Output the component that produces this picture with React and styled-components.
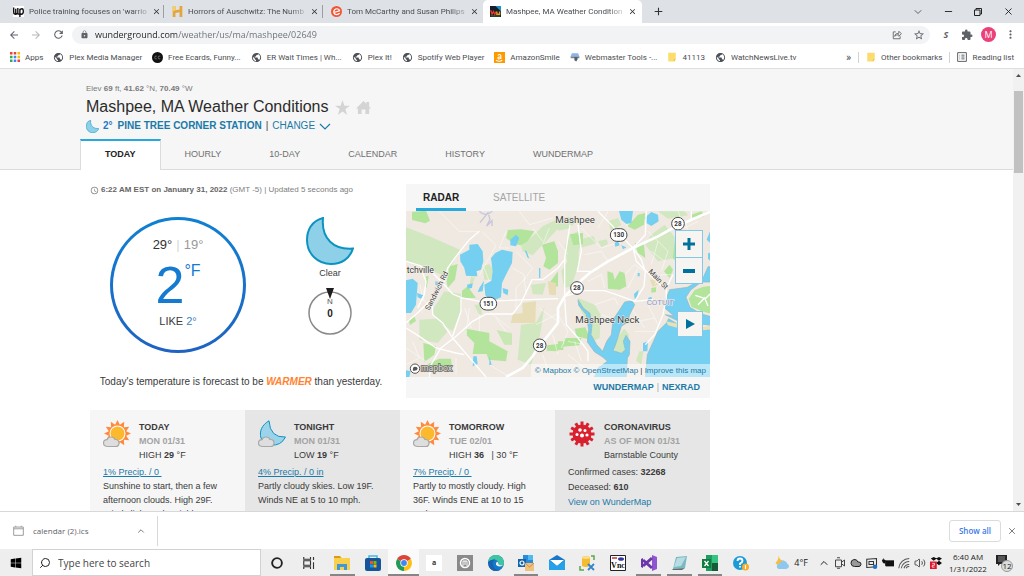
import React from "react";
import styled, {createGlobalStyle, css} from "styled-components";
import {
    MdAccessTime, MdAdd, MdArrowBack, MdArrowForward, MdClose, MdExtension,
    MdLock, MdMoreVert, MdPublic, MdRefresh, MdStarBorder
} from "react-icons/md";
import {FaWindows} from "react-icons/fa";
import {ChevronDown, ChevronUp, Cloud, Minus, Search, Volume2, X} from "lucide-react";

const colors = {
    link: "#1a7aa8",
    accent: "#26a9dc",
    text: "#3a3a3a",
    panel: "#f6f6f6",
    panelDark: "#e6e6e6",
    chrome: "#5f6368",
}

const fonts = {
    ui: '"Open Sans", "Noto Sans", sans-serif',
    small: 'Roboto, "Noto Sans", sans-serif',
    page: '"Liberation Sans", Arial, sans-serif',
}

const GlobalStyle = createGlobalStyle`
  * {
    box-sizing: border-box;
  }

  body {
    margin: 0;
    background: #fff;
    font-family: ${fonts.ui};
    font-size: 9px;
  }

  button, input {
    margin: 0;
    padding: 0;
    border: 0;
    background: none;
    font-family: inherit;
    font-size: inherit;
    color: inherit;
  }

  a {
    color: ${colors.link};
    text-decoration: none;
  }

  svg {
    display: block;
    flex: none;
  }
`

const Screen = styled.div`
  display: flex;
  flex-direction: column;
  height: 100vh;
`

/* ---------- browser frame ---------- */

const TabStrip = styled.div`
  display: flex;
  align-items: stretch;
  height: 23px;
  padding-left: 6px;
  background: #dee1e6;
`
const BrowserTab = styled.div`
  flex: 0 1 159px;
  min-width: 0;
  display: flex;
  align-items: center;
  gap: 5px;
  padding: 0 4px 0 7px;
  font-family: ${fonts.small};
  font-size: 8px;
  color: #4a4d51;
  border-right: 1px solid transparent;
  background: linear-gradient(#9a9da1, #9a9da1) no-repeat right center / ${props => props.divided ? "1px 13px" : "0 0"};

  ${props => props.active && css`
    background: #fff;
    border-radius: 5px 5px 0 0;
  `}
`
const TabTitle = styled.span`
  flex: 1;
  white-space: nowrap;
  mask-image: linear-gradient(to right, #000 88%, rgba(0, 0, 0, 0.3));
`
const IconButton = styled.button`
  display: flex;
  align-items: center;
  justify-content: center;
  width: ${props => props.w || 22}px;
  color: ${props => props.color || colors.chrome};
`
const WindowButtons = styled.div`
  display: flex;
  margin-left: auto;
`

const Toolbar = styled.div`
  display: flex;
  align-items: center;
  height: 23px;
  padding: 0 4px 0 3px;
`
const Omnibox = styled.div`
  flex: 1;
  display: flex;
  align-items: center;
  height: 18px;
  margin: 0 5px 0 3px;
  padding: 0 3px 0 8px;
  gap: 6px;
  border-radius: 9px;
  background: #f1f3f4;
  color: ${colors.chrome};
`
const Address = styled.input`
  flex: 1;
  min-width: 0;
  height: 16px;
  font-size: 9px;
  color: transparent;
  background: linear-gradient(to right, #202124 82px, #6a6e73 82px);
  background-clip: text;
`
const Avatar = styled.button`
  width: 15px;
  height: 15px;
  margin: 0 4px;
  border-radius: 50%;
  background: #ec407a;
  color: #fff;
  line-height: 15px;
`

const Bookmarks = styled.nav`
  display: flex;
  align-items: center;
  gap: 10px;
  height: 23px;
  padding: 0 10px;
  border-bottom: 1px solid #dcdee0;
  font-family: ${fonts.small};
  font-size: 8px;
  color: #4a4d51;
`
const Bookmark = styled.a`
  display: flex;
  align-items: center;
  gap: 5px;
  white-space: nowrap;
  color: inherit;
`
const BookmarksEnd = styled.div`
  display: flex;
  align-items: center;
  gap: 7px;
  margin-left: auto;
`
const More = styled.button`
  font-size: 11px;
`
const Divider = styled.span`
  width: 1px;
  height: 11px;
  background: #d0d3d6;
`

/* ---------- web page ---------- */

const Viewport = styled.div`
  flex: 1;
  min-height: 0;
  display: flex;
`
const Page = styled.main`
  flex: 1;
  overflow: hidden;
  font-family: ${fonts.page};
  color: ${colors.text};
`
const Scrollbar = styled.div`
  display: flex;
  flex-direction: column;
  align-items: center;
  gap: 13px;
  width: 11px;
  padding: 4px 0;
  background: #f1f1f1;
`
const Thumb = styled.div`
  width: 9px;
  height: 19%;
  margin-bottom: auto;
  background: #c1c1c1;
`

const Container = styled.div`
  max-width: 630px;
  margin-left: 80px;
`
const PageHeader = styled.header`
  padding-top: 14px;
  background: ${colors.panel};
  box-shadow: inset 0 -1px #dcdcdc;
`
const HeaderText = styled.div`
  padding: 0 6px 6px;
`
const Elevation = styled.div`
  font-size: 8px;
  line-height: 12px;
  color: #7a7a7a;
`
const TitleRow = styled.div`
  display: flex;
  align-items: center;
  gap: 6px;
  margin: 2px 0;
`
const Title = styled.h1`
  margin: 0;
  font-size: 16px;
  line-height: 20px;
  font-weight: 400;
  color: #2b2b2b;
`
const Station = styled.div`
  display: flex;
  align-items: center;
  gap: 4px;
  font-size: 10px;
  line-height: 14px;
`
const StationTemp = styled.b`
  margin-right: 1px;
  color: #1f78c8;
`
const PageTabs = styled.nav`
  display: flex;
  height: 31px;
`
const PageTab = styled.a`
  padding: 0 24px;
  line-height: 30px;
  color: #707070;

  ${props => props.active && css`
    line-height: 27px;
    border: 1px solid #dcdcdc;
    border-top: 2px solid ${colors.accent};
    border-bottom: 0;
    background: #fff;
    font-weight: 700;
    color: #222;
  `}
`

const Content = styled.div`
  padding: 14px 0 0 10px;
`
const Columns = styled.div`
  display: grid;
  grid-template-columns: 302px 1fr;
  gap: 14px;
`
const Updated = styled.div`
  display: flex;
  align-items: center;
  gap: 2px;
  font-size: 8px;
  line-height: 12px;
  color: #808080;

  & b {
    color: #666;
  }
`
const Now = styled.div`
  display: flex;
  gap: 60px;
  margin-top: 21px;
  padding-left: 20px;
`
const Dial = styled.div`
  display: flex;
  flex-direction: column;
  align-items: center;
  width: 136px;
  height: 136px;
  padding-top: 17px;
  border: 3px solid transparent;
  border-radius: 50%;
  background: linear-gradient(#fff, #fff) padding-box, linear-gradient(#0f80d2, #1f62c2) border-box;
`
const HighLow = styled.div`
  display: flex;
  gap: 4px;
  font-size: 13px;
  line-height: 16px;
  color: #999;

  & strong {
    font-weight: 400;
    color: #333;
  }

  & i {
    font-style: normal;
    color: #d8d8d8;
  }
`
const Temperature = styled.div`
  display: flex;
  align-items: flex-start;
  margin: 6px 0 3px;
  font-size: 52px;
  line-height: 52px;
  color: #147bd1;

  & span {
    margin-top: 2px;
    font-size: 16px;
    line-height: 20px;
  }
`
const FeelsLike = styled.div`
  font-size: 11px;
  line-height: 14px;

  & span {
    color: #3c83c4;
  }
`
const Sky = styled.div`
  display: flex;
  flex-direction: column;
  align-items: center;
  line-height: 12px;
  gap: 2px;
`
const Outlook = styled.p`
  margin: 22px 0 0;
  text-align: center;
  font-size: 10px;
  line-height: 14px;

  & em {
    font-weight: 700;
    color: #ff8331;
  }
`

const MapPanel = styled.section`
  display: flex;
  flex-direction: column;
  height: 214px;
  background: ${colors.panel};
`
const MapTabs = styled.div`
  display: flex;
  gap: 20px;
  height: 27px;
  padding-left: 10px;
`
const MapTab = styled.button`
  padding: 2px 7px 0;
  font-size: 10px;
  color: #a5a5a5;
  border-bottom: 3px solid transparent;

  ${props => props.active && css`
    font-weight: 700;
    color: #222;
    border-color: ${colors.accent};
  `}
`
const MapCanvas = styled.div`
  position: relative;
  flex: 1;
  min-height: 0;

  & > svg {
    width: 100%;
    height: 100%;
  }
`
const MapButtons = styled.div`
  position: absolute;
  right: 7px;
  top: ${props => props.top}px;
  display: flex;
  flex-direction: column;
  border: 1px solid #83c8e4;
  background: #f6f5f2;
`
const MapButton = styled.button`
  display: flex;
  align-items: center;
  justify-content: center;
  width: ${props => props.size}px;
  height: ${props => props.size}px;

  & + & {
    border-top: 1px solid #83c8e4;
  }
`
const Attribution = styled.div`
  position: absolute;
  right: 0;
  bottom: 0;
  padding: 0 4px;
  font-size: 8px;
  line-height: 13px;
  background: rgba(255, 255, 255, 0.5);
`
const MapLinks = styled.div`
  display: flex;
  justify-content: flex-end;
  gap: 3px;
  height: 21px;
  padding-right: 10px;
  line-height: 20px;
  color: #aaa;

  & a {
    font-weight: 700;
  }
`

const Cards = styled.div`
  display: grid;
  grid-template-columns: repeat(4, 1fr);
  margin-top: 12px;
`
const CardWrapper = styled.article`
  padding: 10px 13px;
  line-height: 14px;
  background: ${colors.panel};

  &:nth-child(even) {
    background: ${colors.panelDark};
  }
`
const CardHead = styled.div`
  display: flex;
  gap: 8px;
  margin-bottom: 3px;
  white-space: nowrap;

  & h2 {
    margin: 0;
    font-size: 9px;
  }

  & h3 {
    margin: 0;
    font-size: 9px;
    color: #a3a3a3;
  }
`
const Precip = styled.a`
  display: block;
  text-decoration: underline;
`
const Stat = styled.div`
  line-height: 15px;
`

/* ---------- download shelf and taskbar ---------- */

const Shelf = styled.div`
  display: flex;
  align-items: center;
  height: 38px;
  padding: 0 6px 0 0;
  border-top: 1px solid #d6d8da;
  font-size: 8px;
  color: #5f6368;
`
const Download = styled.button`
  display: flex;
  align-items: center;
  gap: 9px;
  width: 158px;
  height: 30px;
  padding: 0 11px 0 13px;
  border-right: 1px solid #d6d8da;

  & svg:last-child {
    margin-left: auto;
  }
`
const ShowAll = styled.button`
  height: 22px;
  margin: 0 5px 0 auto;
  padding: 0 9px;
  border: 1px solid #dadce0;
  border-radius: 3px;
  font-weight: 600;
  color: #3b78e7;
`

const Taskbar = styled.footer`
  display: flex;
  align-items: stretch;
  height: 27px;
  background: #eee;
  color: #222;
`
const SearchBox = styled.label`
  flex: 0 1 229px;
  display: flex;
  align-items: center;
  gap: 7px;
  padding: 0 6px;
  border: 1px solid #d2d2d2;
  background: #fff;

  & input {
    flex: 1;
    min-width: 0;
    font-size: 10px;
  }

  & input::placeholder {
    color: #444;
    opacity: 1;
  }
`
const Pinned = styled.div`
  flex: 0 1 429px;
  display: grid;
  grid-template-columns: repeat(14, 1fr);
  margin-left: 2px;
`
const AppButton = styled.button`
  display: flex;
  align-items: center;
  justify-content: center;
  margin: 0 3px;
  border-top: 2px solid transparent;
  border-bottom: 2px solid ${props => props.open ? "#868686" : "transparent"};

  ${props => props.current && css`
    margin: 0;
    background-color: #fafafa;
    border-top-color: #fafafa;
  `}
`
const Tray = styled.div`
  display: flex;
  align-items: center;
  gap: 4px;
  margin-left: auto;
`
const Weather = styled.button`
  display: flex;
  align-items: center;
  gap: 5px;
  margin-right: 6px;
`
const Clock = styled.time`
  width: 40px;
  margin-left: 2px;
  text-align: center;
  font-size: 8px;
  line-height: 12px;
  white-space: nowrap;
`
const Notifications = styled.button`
  margin: 0 11px 0 4px;
`

/* ---------- drawings ---------- */

const Glyph = ({size = 11, children, box = 16}) => (
    <svg width={size} height={size} viewBox={`0 0 ${box} ${box}`}>{children}</svg>
)

const AppsIcon = () => (
    <Glyph size={10}>
        {["#ea4335", "#ea4335", "#fbbc04", "#34a853", "#4285f4", "#fbbc04", "#34a853", "#4285f4", "#ea4335"].map((c, i) =>
            <rect key={i} x={(i % 3) * 6} y={Math.floor(i / 3) * 6} width="4" height="4" fill={c}/>)}
    </Glyph>
)
const PostIcon = () => (
    <Glyph>
        <rect width="16" height="16" fill="#fff"/>
        <path d="M1 2v7q0 3 3 3q2 0 3-2q0 2 2 2M4 4v8M7 3v7M10 4v12M10 6q1-2 3-2q2 0 2 4t-3 4q-1 0-2-1" fill="none"
              stroke="#111" strokeWidth="2"/>
    </Glyph>
)
const HistoryIcon = () => (
    <Glyph>
        <path d="M1 0h4v6l6-1V0h4v16h-4V9l-6 1v6H1z" fill="#e3a53c"/>
        <path d="M1 0h4v6l-4 2z" fill="#f3cf67"/>
    </Glyph>
)
const EventIcon = () => (
    <Glyph>
        <circle cx="8" cy="8" r="8" fill="#f05537"/>
        <path d="M4 9.500l8.500-2.500Q12 4 8.500 4Q4.500 4 4 8.500Q4.500 12.500 8.500 12.500Q11 12.500 12.500 10.500" fill="none"
              stroke="#fff" strokeWidth="1.700"/>
    </Glyph>
)
const WuIcon = () => (
    <Glyph>
        <rect width="16" height="16" fill="#16202a"/>
        <path d="M8 0h8v8l-4-4z" fill="#208fc4"/>
        <path d="M1 6l2 6l2-4l2 4l2-4" stroke="#e53528" strokeWidth="2" fill="none"/>
        <path d="M10 8v4h4V8" stroke="#ef9826" strokeWidth="2" fill="none"/>
        <path d="M1 14.500h14" stroke="#3d9b43"/>
    </Glyph>
)
const EcardIcon = () => (
    <Glyph size={11}>
        <circle cx="8" cy="8" r="8" fill="#111"/>
        <path d="M7 6q-3-1-3 2t3 2M12 6q-3-1-3 2t3 2" fill="none" stroke="#888"/>
    </Glyph>
)
const AmazonIcon = () => (
    <Glyph size={11}>
        <rect width="16" height="16" fill="#f90"/>
        <path d="M5.500 5q3-2.500 4.500 0v5M10 7Q5 7 5.500 9T10 9M3 12q5 3 9 0" fill="none" stroke="#fff" strokeWidth="1.500"/>
    </Glyph>
)
const ToolsIcon = () => (
    <Glyph size={10}>
        <path d="M3 2h10l2 5H1z" fill="#8bb4ea"/>
        <path d="M1 7h14v3H1z" fill="#7b8794"/>
        <path d="M7 8h5v4l-2 3l-3-2z" fill="#555f6b"/>
    </Glyph>
)
const NoteIcon = () => (
    <Glyph size={10}>
        <path d="M2 1h12v10l-2 4H2z" fill="#fbdc6c"/>
        <path d="M14 11l-3 4v-3z" fill="#e8b93a"/>
    </Glyph>
)
const ReadingIcon = () => (
    <Glyph size={10}>
        <path d="M1 1h14v14H1zM4 5h1M4 8h1M4 11h1M7 5h5M7 8h5M7 11h5" fill="none" stroke="#5f6368" strokeWidth="1.600"/>
    </Glyph>
)
const ShareIcon = () => (
    <Glyph size={10}>
        <path d="M6 3H2v11h11v-4M4 10q1-5 7-5V2l4 4l-4 4V7.500Q7 7.500 4 10z" fill="none" stroke="#5f6368"
              strokeWidth="1.400"/>
    </Glyph>
)

const Moon = ({size, stroke = 1}) => (
    <svg width={size} height={size} viewBox="0 0 48 48">
        <path d="M17 1C5 4 1 14 1 23c0 14 11 24 24 24c11 0 19-6 22-15.500C28 33 15 22 17 1z" fill="#8fd0e9"
              stroke="#0c93c0" strokeWidth={stroke} strokeLinejoin="miter"/>
    </svg>
)

const CloudShape = () => (
    <path d="M5 26.500q-4.500 0-4.500-3.500q0-3 3.500-3.300q1-2.700 4-2.700q3 0 4 2.500q4-.3 4 3.500t-4 3.500z" fill="#dedede"
          stroke="#a8a8a8" strokeWidth="1.200"/>
)

const rays = Array.from({length: 24}, (_, i) => {
    const a = i * Math.PI / 12
    const r = i % 2 ? 9 : 13.500
    return `${14.500 + r * Math.sin(a)},${13.500 - r * Math.cos(a)}`
}).join(" ")

const SunCloud = () => (
    <svg width="28" height="28" viewBox="0 0 28 28">
        <polygon points={rays} fill="#ff8a3d"/>
        <circle cx="14.500" cy="13.500" r="8" fill="#fff"/>
        <circle cx="14.500" cy="13.500" r="7" fill="#fdb92e"/>
        <CloudShape/>
    </svg>
)
const MoonCloud = () => (
    <svg width="28" height="28" viewBox="0 0 28 28">
        <path d="M11 .8C4 5 1 11 3 18q3 7 10 7q10 1 14.500-8Q12 18 11 .8z" fill="#9ad3ea" stroke="#0c93c0"/>
        <CloudShape/>
    </svg>
)
const Virus = () => (
    <svg width="28" height="28" viewBox="0 0 28 28">
        <circle cx="14" cy="14" r="9.500" fill="#d9202e"/>
        {Array.from({length: 12}, (_, i) => (
            <path key={i} d="M12.500 1.500h3v5h-3z" fill="#d9202e" transform={`rotate(${i * 30} 14 14)`}/>
        ))}
        <g fill="#fff">
            <circle cx="12" cy="10" r="1.800"/>
            <circle cx="17" cy="10.500" r="1.500"/>
            <circle cx="9" cy="14.500" r="1.500"/>
            <circle cx="14" cy="15.500" r="2"/>
            <circle cx="19" cy="15" r="1.600"/>
        </g>
    </svg>
)
const Compass = () => (
    <svg width="46" height="54" viewBox="0 0 46 54" fontFamily="Liberation Sans" textAnchor="middle">
        <circle cx="23" cy="32" r="21" fill="#fff" stroke="#8a8a8a" strokeWidth="1.500"/>
        <text x="23" y="23" fontSize="8" fill="#555">N</text>
        <path d="M19 7h8l-4 11z" fill="#1d1d1d"/>
        <text x="23" y="36" fontSize="10" fontWeight="700" fill="#222">0</text>
    </svg>
)

const routes = [
    {n: "28", x: 816, y: 47, w: 38},
    {n: "130", x: 638, y: 81, w: 50},
    {n: "28", x: 513, y: 240, w: 38},
    {n: "151", x: 247, y: 287, w: 50},
    {n: "28", x: 401, y: 412, w: 38},
]

// drawn in two halves, the eastern one shifted by 456
const WestLand = () => (
    <>
        <g fill="#d1e7c0">
            <path d="M0 58L70 85L162 125L120 205L0 160zM115 250L165 258L168 300L140 370L95 342L78 310z"/>
            <path d="M40 335L90 332L125 370L95 405L40 395zM345 112L380 85L410 55L456 33V62L410 110L380 142L350 130z"/>
            <path d="M345 350L390 345L415 298L402 380L376 470L335 455zM375 230L420 225L410 260L380 258z"/>
            <path d="M230 175L250 168L262 185L255 215L235 215zM205 290L225 290L228 320L218 318zM196 205l12 0-10 30-8-4z"/>
        </g>
        <g fill="#b3e49b">
            <path d="M18 12L60 8L72 38L58 46L18 36zM306 66L345 64L385 70L365 100L345 112L325 108L300 90z"/>
            <path d="M408 110L445 100L456 130V165L430 185L412 175L420 150zM430 225L456 190V235L430 240z"/>
            <path d="M132 175L155 168L147 215L125 240L122 220zM168 248L185 235L210 270L168 270z"/>
            <path d="M180 362L250 375L250 400L305 430L300 460L248 455L242 438L200 438L205 405L182 382z"/>
            <path d="M52 405L90 415L85 440L55 462zM65 468L100 452L135 452L138 478L80 494zM350 290l25-5 0 30-23 3z"/>
            <path d="M8 335l18-8 4 12-18 12zM60 205l8 0-6 34-8-2zM424 412l32-4v22l-34-2z"/>
        </g>
        <path d="M272 366L318 376V410L295 410z" fill="#c9e6b5"/>
        <path d="M350 285L390 280L388 345L315 345L320 318L350 316zM425 220L450 225V262L430 260z" fill="#e6dcb5"/>
        <g fill="none" stroke="#fff" strokeWidth="1.500">
            <path d="M320 180l34 20 6 60M330 300v-60l30-30M300 70l-20 50 30 0M176 300l20 60M190 300l-10 80M220 320l0 50"/>
            <path d="M60 210l-10 60 20 30M42 230l10 50M270 330l30 40M250 310l60 50M400 300l56 40M390 350l60-30M0 420l60 40"/>
            <path d="M230 72l40 40-50 90M200 210l30-40 20 50M0 470l40-20-20-50M150 450l0 50M250 470l60 37M410 440l20 60"/>
            <path d="M380 60l30 40M330 130l50 50-30 40M430 60l-20 50M440 380l16 60M340 10l30 40 70-20M100 10l60 60 60 0"/>
        </g>
        <g fill="#75cff0">
            <path d="M162 140L190 125L190 110L215 108L230 130L232 160L225 185L212 190L214 205L180 203L175 180L163 160z"/>
            <path d="M255 150L268 135L288 125L320 132L318 165L300 200L288 225L285 268L258 280L238 262L235 230L256 218L260 190z"/>
            <path d="M0 217L20 212L35 225L30 290L15 315H0zM33 255L52 262L45 272L35 268zM313 95L330 80L340 90L330 115L313 112z"/>
            <path d="M290 240L307 245L305 262L292 255zM183 230L200 226L198 240L185 242zM220 240L234 218L230 250L215 252z"/>
            <path d="M202 445H212L215 468L200 475zM250 446L257 470L250 472zM88 220L98 222L95 233L88 230zM399 180h4v30h-4z"/>
            <path d="M0 487L14 490L10 507H0zM356 126l6 4 8 22-6-4z"/>
        </g>
        <path d="M220 10q20 20 40-2M222 44l24-30 6 20-10 20 16-16 0 16" fill="none" stroke="#c8c6dc" strokeWidth="4"/>
        <g fill="none" stroke="#fff" strokeWidth="4">
            <path d="M0 160L40 172L75 190L110 225L140 258L170 270L220 280L456 272"/>
            <path d="M220 70L190 95L150 145L125 180L115 220L80 270L40 310L0 345M78 265L80 320L110 345L140 390L200 460L240 507"/>
            <path d="M165 270V310L140 385M0 360L40 385L90 420L150 435L175 440M50 195L60 220L55 260L35 300"/>
            <path d="M70 507L75 470L105 420L150 385L200 340L240 318L320 318L345 285L378 215L410 215L456 180"/>
        </g>
        <path d="M456 345L420 390L395 420L380 445L350 480L300 507" fill="none" stroke="#fff" strokeWidth="8"/>
    </>
)
const EastLand = () => (
    <g transform="translate(456 0)">
        <g fill="#d1e7c0">
            <path d="M30 85L60 70L75 90L62 130L62 170L40 235L18 240L10 190L28 160L20 120zM0 40l30-14 30 12-30 24-30 6z"/>
            <path d="M60 270L110 290L128 320L125 390L105 400L95 360L65 300zM205 450l8-70-14-18-28 36 0 34z"/>
            <path d="M280 80L320 50L352 90V150L300 160L262 110zM244 430l12 0-6 40-16-12zM60 96l46-12 10 22-50 14z"/>
            <path d="M120 100l26-6 4 14-20 10zM300 10l80 0 10 12-60 10zM150 40l30-10 10 20-30 20z"/>
        </g>
        <g fill="#b3e49b">
            <path d="M36 78L75 75V108L46 112zM148 190L165 195L170 215L185 190L200 195L205 235L185 245L150 242z"/>
            <path d="M208 55L240 20L262 15L258 50L230 65zM230 105L258 110L262 150L240 135zM50 362L82 358L98 395L56 385z"/>
            <path d="M318 190L335 170L345 185L335 210zM190 320L215 325V345L190 350zM20 390l50 0-6 22-48 4zM0 400l16 0v26H0z"/>
            <path d="M280 240l14-2 0 14-14 2zM400 20l30-10 10 14-36 10zM350 100l4 60-10-10z"/>
        </g>
        <path d="M276 216l20-4 8 16-20 8z" fill="#e6dcb5"/>
        <g fill="none" stroke="#fff" strokeWidth="1.500">
            <path d="M70 60l60 60 60-20M80 140l50-10 20 30M90 220l40-20 10 40M110 290l60-20 10 20M130 320l30 10"/>
            <path d="M200 200l30-30 30 20M210 60l-20-40M270 70l60 60-20 60M280 130l40 30M300 100l-20 70M240 180l-30 60"/>
            <path d="M240 340l50-10M230 370l60 0M220 300l40 60M270 290l30 60M0 100l30 40M0 320l30 50-20 50M30 440l50 40"/>
            <path d="M360 10l20 50 40-20M380 40l10 30M290 230l20-30 30 0M50 400l20 60M30 400l50 10M120 60l30-50"/>
        </g>
        <g fill="#75cff0" stroke="#93b6bf" strokeWidth="2">
            <path d="M262 510L268 440L300 370L325 345L332 332L362 350L460 362V510z"/>
            <path d="M335 245L388 238L412 224L436 208L450 176H460V222L430 222L398 246L384 268L396 298L430 318L460 326V352L362 340L322 320L348 324L320 300V282z"/>
            <path d="M60 275L76 300L96 316L102 350L99 380L116 410L134 430L146 400L160 380L165 335L182 310L200 282L222 278L230 290L216 318L205 345L190 355L176 400L166 428L190 436L202 425L196 400L204 382L216 400L214 440L208 450L205 510H108L120 480L148 460L135 448L110 432L88 402L92 365L85 320L62 292z"/>
        </g>
        <path d="M392 272L410 246L436 236L460 234V318L432 310L400 296z" fill="#b3e49b"/>
        <path d="M412 262l30 10 14-14M420 290l20-20 10 24" fill="none" stroke="#fff" strokeWidth="4"/>
        <path d="M324 340l50 10 60 8 26-6v12l-40 4-60-8-30-8z" fill="#e9e0b8"/>
        <g fill="#75cff0">
            <path d="M183 9H225L220 45L205 48L190 35zM262 28L280 12L300 20L302 40L280 54L265 45zM446 95L456 70V104z"/>
            <path d="M170 105L180 99L185 112L172 116zM190 112L205 118L195 124zM255 405L270 400L268 430L255 430z"/>
            <path d="M228 258L242 245L236 274L230 272zM239 195h6v10h-6zM48 236l12-2-10 18zM450 136l6-2v24l-6-6zM270 270l10-4 2 8-10 4z"/>
        </g>
        <g fill="none" stroke="#fff" strokeWidth="4">
            <path d="M120 10L160 50L200 95L225 120L250 155L262 190L258 235L230 280M225 120L235 160L300 225L325 245V270L315 320L290 380L262 410"/>
            <path d="M60 50L70 130L58 190H98M20 265L80 248H140L190 265L230 280L285 275M20 270L25 350L60 390L90 430V460"/>
            <path d="M265 9L262 80L225 120M36 50L20 150V265M345 200L325 240M400 9V35M0 180L22 152"/>
        </g>
        <path d="M460 10L400 35L345 60L300 85L225 120L150 160L95 195L55 230L20 265L0 300V345" fill="none" stroke="#fff"
              strokeWidth="8"/>
    </g>
)

const AreaMap = () => (
    <svg viewBox="0 9 912 498" preserveAspectRatio="xMidYMid slice" fontFamily="Roboto, sans-serif">
        <rect y="0" width="912" height="510" fill="#efe9e1"/>
        <WestLand/>
        <EastLand/>
        <g fill="#3c3c3c" fontSize="29" stroke="#f5f1ec" strokeWidth="3" paintOrder="stroke">
            <text x="448" y="46">Mashpee</text>
            <text x="508" y="345">Mashpee Neck</text>
            <text x="2" y="194" fontSize="26">tchville</text>
            <text x="70" y="308" fontSize="22" transform="rotate(-63 70 308)">Sandwich Rd</text>
            <text x="726" y="192" fontSize="22" transform="rotate(46 726 192)">Main St</text>
            <text x="722" y="291" fontSize="24" fill="#8f96c6">COTUIT</text>
        </g>
        {routes.map((r, i) => (
            <g key={i}>
                <rect x={r.x - r.w / 2} y={r.y - 19} width={r.w} height="38" rx="19" fill="#fff" stroke="#4a4a4a"
                      strokeWidth="3"/>
                <text x={r.x} y={r.y + 7} fontSize="19" fontWeight="700" textAnchor="middle" fill="#333">{r.n}</text>
            </g>
        ))}
        <circle cx="27" cy="482" r="14" fill="#fff" stroke="#555" strokeWidth="3"/>
        <path d="M21 488q-2-12 6-12t8 6q-2 8-14 6z" fill="#555"/>
        <text x="45" y="490" fontSize="26" fill="#e4e0da" stroke="#666" strokeWidth="5"
              paintOrder="stroke">mapbox</text>
    </svg>
)

/* ---------- data ---------- */

const tabs = [
    {title: "Police training focuses on 'warrio", icon: <PostIcon/>, divided: true},
    {title: "Horrors of Auschwitz: The Numb", icon: <HistoryIcon/>, divided: true},
    {title: "Tom McCarthy and Susan Philips", icon: <EventIcon/>},
    {title: "Mashpee, MA Weather Condition", icon: <WuIcon/>, active: true},
]

const globe = <MdPublic size={11} color="#4d5156"/>
const bookmarks = [
    {label: "Apps", icon: <AppsIcon/>},
    {label: "Plex Media Manager", icon: globe},
    {label: "Free Ecards, Funny...", icon: <EcardIcon/>},
    {label: "ER Wait Times | Wh...", icon: globe},
    {label: "Plex It!", icon: globe},
    {label: "Spotify Web Player", icon: globe},
    {label: "AmazonSmile", icon: <AmazonIcon/>},
    {label: "Webmaster Tools -...", icon: <ToolsIcon/>},
    {label: "41113", icon: <NoteIcon/>},
    {label: "WatchNewsLive.tv", icon: globe},
]

const pageTabs = ["TODAY", "HOURLY", "10-DAY", "CALENDAR", "HISTORY", "WUNDERMAP"]

const forecast = [
    {
        title: "TODAY", date: "MON 01/31", icon: <SunCloud/>, range: <>HIGH <b>29</b> °F</>,
        precip: "1% Precip. / 0\u00a0", body: "Sunshine to start, then a few afternoon clouds. High 29F. Winds light and variable."
    },
    {
        title: "TONIGHT", date: "MON 01/31", icon: <MoonCloud/>, range: <>LOW <b>19</b> °F</>,
        precip: "4% Precip. / 0 in", body: "Partly cloudy skies. Low 19F. Winds NE at 5 to 10 mph."
    },
    {
        title: "TOMORROW", date: "TUE 02/01", icon: <SunCloud/>, range: <>HIGH <b>36</b> &nbsp; | 30 °F</>,
        precip: "7% Precip. / 0\u00a0", body: "Partly to mostly cloudy. High 36F. Winds ENE at 10 to 15 mph."
    },
]

const apps = [
    {
        name: "File Explorer", open: true, art: <>
            <path d="M0 1h6l2 2h8v12H0z" fill="#f9cf4e"/>
            <path d="M0 1h6l1 2H0z" fill="#d99a18"/>
            <path d="M3 15V9h10v6h-3v-3H6v3z" fill="#3f97dc"/>
        </>
    },
    {
        name: "Store", art: <>
            <path d="M4 3V1h8v2" fill="none" stroke="#45b7e8" strokeWidth="1.500"/>
            <rect y="3" width="16" height="13" rx="2" fill="#17549b"/>
            <path d="M5 6h3v3H5z" fill="#f25022"/>
            <path d="M8.500 6h3v3h-3z" fill="#7fba00"/>
            <path d="M5 9.500h3v3H5z" fill="#00a4ef"/>
            <path d="M8.500 9.500h3v3h-3z" fill="#ffb900"/>
        </>
    },
    {
        name: "Chrome", open: true, current: true, art: <>
            <path d="M8 8L1.100 4A8 8 0 0 1 14.900 4z" fill="#db4437"/>
            <path d="M8 8l6.900-4A8 8 0 0 1 8 16z" fill="#fbc116"/>
            <path d="M8 8v8A8 8 0 0 1 1.100 4z" fill="#229a55"/>
            <circle cx="8" cy="8" r="3.700" fill="#fff"/>
            <circle cx="8" cy="8" r="2.900" fill="#4285f4"/>
        </>
    },
    {
        name: "Amazon", art: <>
            <rect width="16" height="16" fill="#fff"/>
            <text x="8" y="10" fontSize="7" fontWeight="700" textAnchor="middle" fill="#333">a</text>
        </>
    },
    {
        name: "Reader", art: <>
            <rect width="16" height="16" fill="#8a8a8a"/>
            <circle cx="8" cy="8" r="4.500" fill="none" stroke="#fff" strokeWidth="1.500"/>
            <path d="M6 11V6h4v5M8 6v4" fill="none" stroke="#fff"/>
        </>
    },
    {
        name: "Edge", art: <>
            <circle cx="8" cy="8" r="8" fill="#1379c9"/>
            <path d="M0 7C1 1 6-1 10 .3C15 2 17 7 15.500 10Q13 12 10 10.500Q12 6 7 4.500Q3 4 0 7z" fill="#3ec6a0"/>
            <path d="M0 7Q3 4 7 4.500Q4 6 5 10Q6 15 12 15Q5 18 1 12z" fill="#1a62b0"/>
            <path d="M9 6.500q-3 4 2 5q3 0 4-1q-3 0-4.500-1q.5-2-1.500-3z" fill="#eee"/>
        </>
    },
    {
        name: "Outlook", open: true, art: <>
            <path d="M5 0h10v10H5z" fill="#2a8bd8"/>
            <path d="M10 0h5v5h-5z" fill="#50b9f2"/>
            <rect y="4" width="8" height="8" fill="#1264ad"/>
            <circle cx="4" cy="8" r="2" fill="none" stroke="#fff" strokeWidth="1.200"/>
            <path d="M7 8h9v8H7z" fill="#f0c07d"/>
            <path d="M7 8l4.500 4L16 8" fill="none" stroke="#c98e45"/>
        </>
    },
    {
        name: "Mail", art: <>
            <path d="M0 5l8-5l8 5v10H0z" fill="#1677cb"/>
            <path d="M1 5h14l-7 6z" fill="#fff"/>
            <path d="M0 5l8 6l8-6v10H0z" fill="#26a0e8"/>
        </>
    },
    {
        name: "Data Tools", art: <>
            <path d="M3 2q4-2 8 0v9q-4 2-8 0z" fill="#f4bd31"/>
            <ellipse cx="7" cy="2.500" rx="4" ry="1.300" fill="#fbe08f"/>
            <path d="M1 11v4h4M12 1h3v4" fill="none" stroke="#5fa64a" strokeWidth="1.500"/>
            <path d="M9 9l6 6M15 9l-6 6" stroke="#3483cc" strokeWidth="1.800"/>
        </>
    },
    {
        name: "VNC", art: <>
            <path d="M.5.500h15v15H.5z" fill="#fff" stroke="#222"/>
            <path d="M2 3h5" stroke="#c33" strokeWidth="1.500"/>
            <ellipse cx="11" cy="4" rx="3" ry="1.800" fill="#3636a0"/>
            <text x="8" y="13" fontSize="8" fontWeight="700" fontFamily="Liberation Serif" textAnchor="middle"
                  fill="#111">Vnc</text>
        </>
    },
    {
        name: "Visual Studio", open: true, art: <>
            <path d="M11 0l5 2v12l-5 2z" fill="#8f55cf"/>
            <path d="M2 5l9 8M2 11l9-8" stroke="#6c36ab" strokeWidth="3"/>
            <path d="M0 4l2-1v10l-2-1z" fill="#6c36ab"/>
        </>
    },
    {
        name: "Notepad", open: true, art: <>
            <path d="M5 2l11-1l-2 12l-12 1z" fill="#79b9c4"/>
            <path d="M6 3l9-1l-5 9l-7 1z" fill="#b7dce2"/>
            <path d="M1 14l13-1l-3 2H2z" fill="#5f6c70"/>
        </>
    },
    {
        name: "Excel", open: true, art: <>
            <path d="M4 0h12v16H4z" fill="#1f9c60"/>
            <path d="M10 0h6v8h-6z" fill="#33c481"/>
            <path d="M10 8h6v8h-6z" fill="#185c37"/>
            <rect y="4" width="9" height="9" fill="#107c41"/>
            <path d="M2.500 6l4 5M6.500 6l-4 5" stroke="#fff" strokeWidth="1.300"/>
        </>
    },
    {
        name: "Help", art: <>
            <circle cx="7" cy="8" r="7" fill="#1b9ad8"/>
            <path d="M4.500 6q0-2.500 2.500-2.500T9.500 6Q9.500 7.500 7 8.500V10M7 11v1.500" fill="none" stroke="#fff" strokeWidth="1.800"/>
            <circle cx="12.500" cy="12" r="3.500" fill="#f7ac2a"/>
            <path d="M12.500 10v4" stroke="#fff" strokeWidth="1.200"/>
        </>
    },
]

/* ---------- parts ---------- */

export const Card = (props) => {
    const cardsData = props.data
    return (
        <CardWrapper>
            <CardHead>
                {cardsData.icon}
                <div>
                    <h2>{cardsData.title}</h2>
                    <h3>{cardsData.date}</h3>
                    {cardsData.range}
                </div>
            </CardHead>
            {props.children || <>
                <Precip href="#precip">{cardsData.precip}</Precip>
                {cardsData.body}
            </>}
        </CardWrapper>
    )
}

export const BrowserFrame = () => {
    return (
        <>
            <TabStrip>
                {tabs.map(tab => (
                    <BrowserTab key={tab.title} active={tab.active} divided={tab.divided}>
                        {tab.icon}
                        <TabTitle>{tab.title}</TabTitle>
                        <IconButton w={10} color="#333" aria-label="Close tab"><MdClose size={9}/></IconButton>
                    </BrowserTab>
                ))}
                <IconButton w={32} color="#333" aria-label="New tab"><MdAdd size={13}/></IconButton>
                <WindowButtons>
                    <IconButton w={30} aria-label="Search tabs"><ChevronDown size={12} strokeWidth={2}/></IconButton>
                    <IconButton w={30} color="#222" aria-label="Minimize"><Minus size={11} strokeWidth={2}/></IconButton>
                    <IconButton w={30} color="#222" aria-label="Restore">
                        <Glyph size={8}><path d="M1 4h11v11H1zM4 4V1h11v11h-3" fill="none" stroke="#222"
                                              strokeWidth="2"/></Glyph>
                    </IconButton>
                    <IconButton w={31} color="#222" aria-label="Close"><X size={11} strokeWidth={2}/></IconButton>
                </WindowButtons>
            </TabStrip>
            <Toolbar>
                <IconButton aria-label="Back"><MdArrowBack size={12}/></IconButton>
                <IconButton color="#b5b8bb" aria-label="Forward"><MdArrowForward size={12}/></IconButton>
                <IconButton aria-label="Reload"><MdRefresh size={13}/></IconButton>
                <Omnibox>
                    <MdLock size={9}/>
                    <Address aria-label="Address" defaultValue="wunderground.com/weather/us/ma/mashpee/02649"/>
                    <IconButton w={16} aria-label="Share"><ShareIcon/></IconButton>
                    <IconButton w={16} aria-label="Bookmark"><MdStarBorder size={12}/></IconButton>
                </Omnibox>
                <IconButton aria-label="Extension"><b><i>S</i></b></IconButton>
                <IconButton w={20} aria-label="Extensions"><MdExtension size={12}/></IconButton>
                <Avatar>M</Avatar>
                <IconButton w={20} aria-label="Menu"><MdMoreVert size={13}/></IconButton>
            </Toolbar>
            <Bookmarks>
                {bookmarks.map(item => (
                    <Bookmark key={item.label} href="#bookmark">{item.icon}{item.label}</Bookmark>
                ))}
                <BookmarksEnd>
                    <More>»</More>
                    <Divider/>
                    <Bookmark href="#other"><NoteIcon/>Other bookmarks</Bookmark>
                    <Divider/>
                    <Bookmark href="#reading"><ReadingIcon/>Reading list</Bookmark>
                </BookmarksEnd>
            </Bookmarks>
        </>
    )
}

export const RadarMap = () => {
    return (
        <MapPanel>
            <MapTabs>
                <MapTab active>RADAR</MapTab>
                <MapTab>SATELLITE</MapTab>
            </MapTabs>
            <MapCanvas>
                <AreaMap/>
                <MapButtons top={19}>
                    <MapButton size={26} aria-label="Zoom in">
                        <Glyph size={12} box={12}><path d="M6 0v12M0 6h12" stroke="#00709c" strokeWidth="3"/></Glyph>
                    </MapButton>
                    <MapButton size={26} aria-label="Zoom out">
                        <Glyph size={12} box={12}><path d="M0 6h12" stroke="#00709c" strokeWidth="4"/></Glyph>
                    </MapButton>
                </MapButtons>
                <MapButtons top={100}>
                    <MapButton size={24} aria-label="Play">
                        <Glyph size={10} box={10}><path d="M1 0l9 5l-9 5z" fill="#00709c"/></Glyph>
                    </MapButton>
                </MapButtons>
                <Attribution>
                    <a href="#mapbox">© Mapbox</a> <a href="#osm">© OpenStreetMap</a> | <a href="#improve">Improve this
                    map</a>
                </Attribution>
            </MapCanvas>
            <MapLinks><a href="#wundermap">WUNDERMAP</a><span>|</span><a href="#nexrad">NEXRAD</a></MapLinks>
        </MapPanel>
    )
}

export const WeatherPage = () => {
    return (
        <Page>
            <PageHeader>
                <Container>
                    <HeaderText>
                        <Elevation>Elev <b>69</b> ft, <b>41.62</b> °N, <b>70.49</b> °W</Elevation>
                        <TitleRow>
                            <Title>Mashpee, MA Weather Conditions</Title>
                            <Glyph size={15}>
                                <path d="M8 0l2 6h6l-5 3.700l2 6.300l-5-3.800L3 16l2-6.300L0 6h6z" fill="#d4d4d4"/>
                            </Glyph>
                            <Glyph size={15}>
                                <path d="M8 1l3 3V2h3v5l2 2h-2v6h-4v-5H6v5H2V9H0z" fill="#d4d4d4"/>
                            </Glyph>
                        </TitleRow>
                        <Station>
                            <Moon size={13} stroke={2}/>
                            <StationTemp>2°</StationTemp>
                            <a href="#station"><b>PINE TREE CORNER STATION</b></a>
                            <span>|</span>
                            <a href="#change">CHANGE</a>
                            <svg width="12" height="7" viewBox="0 0 12 7">
                                <path d="M1 1l5 5l5-5" fill="none" stroke={colors.link} strokeWidth="1.200"/>
                            </svg>
                        </Station>
                    </HeaderText>
                    <PageTabs>
                        {pageTabs.map((name, i) => (
                            <PageTab key={name} href="#tab" active={i === 0}>{name}</PageTab>
                        ))}
                    </PageTabs>
                </Container>
            </PageHeader>
            <Container>
                <Content>
                    <Columns>
                        <div>
                            <Updated>
                                <MdAccessTime size={9}/>
                                <span><b>6:22 AM EST on January 31, 2022</b> (GMT -5) | Updated 5 seconds ago</span>
                            </Updated>
                            <Now>
                                <Dial>
                                    <HighLow><strong>29°</strong><i>|</i>19°</HighLow>
                                    <Temperature>2<span>°F</span></Temperature>
                                    <FeelsLike>LIKE <span>2°</span></FeelsLike>
                                </Dial>
                                <Sky>
                                    <Moon size={48} stroke={2}/>
                                    Clear
                                    <Compass/>
                                </Sky>
                            </Now>
                            <Outlook>Today's temperature is forecast to be <em>WARMER</em> than yesterday.</Outlook>
                        </div>
                        <RadarMap/>
                    </Columns>
                    <Cards>
                        {forecast.map(item => <Card key={item.title} data={item}/>)}
                        <Card data={{
                            title: "CORONAVIRUS", date: "AS OF MON 01/31", icon: <Virus/>, range: "Barnstable County"
                        }}>
                            <Stat>Confirmed cases: <b>32268</b></Stat>
                            <Stat>Deceased: <b>610</b></Stat>
                            <Stat><a href="#wundermap">View on WunderMap</a></Stat>
                        </Card>
                    </Cards>
                </Content>
            </Container>
        </Page>
    )
}

export const SystemBar = () => {
    return (
        <Taskbar>
            <IconButton w={32} color="#000" aria-label="Start"><FaWindows size={12}/></IconButton>
            <SearchBox>
                <Search size={12} strokeWidth={2} transform="scale(-1 1)"/>
                <input type="text" placeholder="Type here to search" aria-label="Search"/>
            </SearchBox>
            <IconButton w={32} aria-label="Cortana">
                <Glyph size={12}><circle cx="8" cy="8" r="6.500" fill="none" stroke="#222" strokeWidth="2.500"/></Glyph>
            </IconButton>
            <IconButton w={32} aria-label="Task view">
                <Glyph size={12}>
                    <path d="M1 0v3h9V0M1 16v-3h9v3M1 5h9v6H1zM14 0v4M14 7v9" fill="none" stroke="#333" strokeWidth="1.500"/>
                </Glyph>
            </IconButton>
            <Pinned>
                {apps.map(app => (
                    <AppButton key={app.name} aria-label={app.name} open={app.open} current={app.current}>
                        <Glyph size={16}>{app.art}</Glyph>
                    </AppButton>
                ))}
            </Pinned>
            <Tray>
                <Weather>
                    <Glyph size={15}>
                        <path d="M5 0q0 6 6 6q-2 4-6 4T2 8q3-3 3-8z" fill="#f7bd3c"/>
                        <path d="M6 15q-3 0-3-3t3-3q1-3 4-3t4 3q2 1 2 3t-3 3z" fill="#8fc7ee"/>
                    </Glyph>
                    4°F
                </Weather>
                <ChevronUp size={12} strokeWidth={2}/>
                <Glyph size={12}>
                    <path d="M2 4h8v9H2zM4 1h4M4 15h4M10 7l4-3v8l-4-3" fill="none" stroke="#333" strokeWidth="1.200"/>
                </Glyph>
                <Cloud size={12} fill="#999"/>
                <Glyph size={12}>
                    <path d="M1 3l13-1v11l-13 1zM4 6h6v4H4z" fill="none" stroke="#333" strokeWidth="1.400"/>
                    <circle cx="12" cy="13" r="3" fill="#1d72c8"/>
                </Glyph>
                <Glyph size={12}>
                    <path d="M4 5h12v7H5zM0 4h4v4H2zM2 2v4" fill="#111" stroke="#111"/>
                </Glyph>
                <Glyph size={12}>
                    <path d="M1 15A14 14 0 0 1 15 2M4.500 15A10 10 0 0 1 15 6M8 15A7 7 0 0 1 15 10M11 15A3 3 0 0 1 15 13"
                          fill="none" stroke="#555" strokeWidth="1.400"/>
                </Glyph>
                <Volume2 size={12} strokeWidth={1.500}/>
                <Glyph size={12}>
                    <path d="M5 0l4 2-4 3-4-3zM12 0l4 2-4 3-4-3zM12 5l4 3-4 3-4-3z" fill="#111"/>
                    <rect y="6" width="9" height="10" fill="#e0162b"/>
                    <path d="M3 8.500h3v2.500H3v2.500h3" fill="none" stroke="#fff"/>
                </Glyph>
                <Clock>6:40 AM<br/>1/31/2022</Clock>
                <Notifications aria-label="Notifications, 12 new">
                    <svg width="17" height="18" viewBox="0 0 17 18">
                        <path d="M0 1h11v9H4l-2 2v-2H0z" fill="#222"/>
                        <path d="M2 3h7M2 5h7M2 7h7" stroke="#888"/>
                        <circle cx="11" cy="12" r="5.500" fill="#ddd" stroke="#999"/>
                        <text x="11" y="15" fontSize="8" textAnchor="middle" fill="#222">12</text>
                    </svg>
                </Notifications>
            </Tray>
        </Taskbar>
    )
}

const App = () => {
    return (
        <Screen>
            <GlobalStyle/>
            <BrowserFrame/>
            <Viewport>
                <WeatherPage/>
                <Scrollbar>
                    <Glyph size={5} box={10}><path d="M0 8l5-6 5 6z" fill="#505050"/></Glyph>
                    <Thumb/>
                    <Glyph size={5} box={10}><path d="M0 2l5 6 5-6z" fill="#505050"/></Glyph>
                </Scrollbar>
            </Viewport>
            <Shelf>
                <Download>
                    <Glyph size={11}>
                        <path d="M1 3h14v12H1zM1 5.500h14M4 1v2M12 1v2" fill="none" stroke="#9a9a9a" strokeWidth="1.400"/>
                    </Glyph>
                    calendar (2).ics
                    <ChevronUp size={10} strokeWidth={2}/>
                </Download>
                <ShowAll>Show all</ShowAll>
                <IconButton w={12} aria-label="Close downloads"><X size={10} strokeWidth={2}/></IconButton>
            </Shelf>
            <SystemBar/>
        </Screen>
    )
}

export default App
